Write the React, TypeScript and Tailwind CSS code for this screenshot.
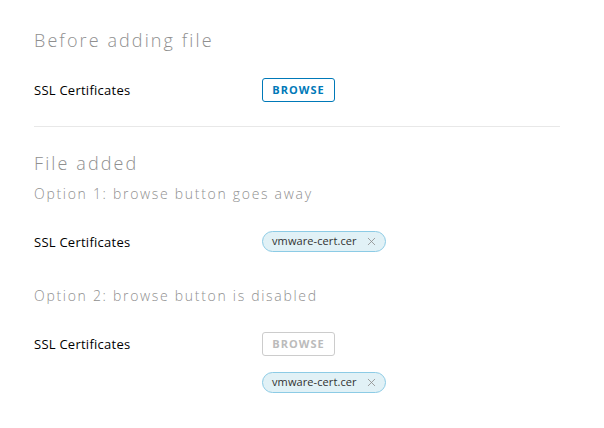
import { X } from 'lucide-react';

const font = { fontFamily: '"Open Sans", Lato, sans-serif' };

function Label() {
  return (
    <div className="w-[228px] shrink-0 text-[13px] leading-[24px] tracking-[0.25px] text-[#000]">
      SSL Certificates
    </div>
  );
}

function BrowseButton({ disabled = false }: { disabled?: boolean }) {
  return (
    <button
      disabled={disabled}
      className={`h-[24px] w-[73px] rounded-[3px] border text-[11px] font-bold tracking-[1px] ${
        disabled ? 'border-[#ccc] text-[#bbb]' : 'border-[#0079b8] text-[#0079b8]'
      }`}
    >
      BROWSE
    </button>
  );
}

function FileChip() {
  return (
    <div className="flex h-[21px] w-[124px] items-center justify-between rounded-full border border-[#8ccbe5] bg-[#e1f1f6] pl-[9px] pr-[7px] text-[11px] tracking-[0.1px] text-[#313131]">
      <span>vmware-cert.cer</span>
      <X className="h-[13px] w-[13px] text-[#8c8c8c]" strokeWidth={1.5} />
    </div>
  );
}

export default function App() {
  return (
    <div className="w-[604px] h-[428px] bg-white px-[34px] pt-[28px]" style={font}>
      <h3 className="text-[18px] font-light leading-[24px] tracking-[2.1px] text-[#8f8f8f]">Before adding file</h3>

      <div className="mt-[26px] flex items-center h-[24px]">
        <Label />
        <BrowseButton />
      </div>

      <div className="mt-[24px] mr-[10px] border-t border-[#e8e8e8]" />

      <h3 className="mt-[24px] text-[18px] font-light leading-[24px] tracking-[2.1px] text-[#8f8f8f]">File added</h3>
      <h4 className="mt-[9px] text-[14px] font-light leading-[20px] tracking-[1.7px] text-[#8f8f8f]">
        Option 1: browse button goes away
      </h4>

      <div className="mt-[24px] flex items-center">
        <div className="pt-[2px]">
          <Label />
        </div>
        <FileChip />
      </div>

      <h4 className="mt-[32px] text-[14px] font-light leading-[20px] tracking-[1.7px] text-[#8f8f8f]">
        Option 2: browse button is disabled
      </h4>

      <div className="mt-[26px] flex">
        <Label />
        <div className="flex flex-col gap-[16px]">
          <BrowseButton disabled />
          <FileChip />
        </div>
      </div>
    </div>
  );
}
